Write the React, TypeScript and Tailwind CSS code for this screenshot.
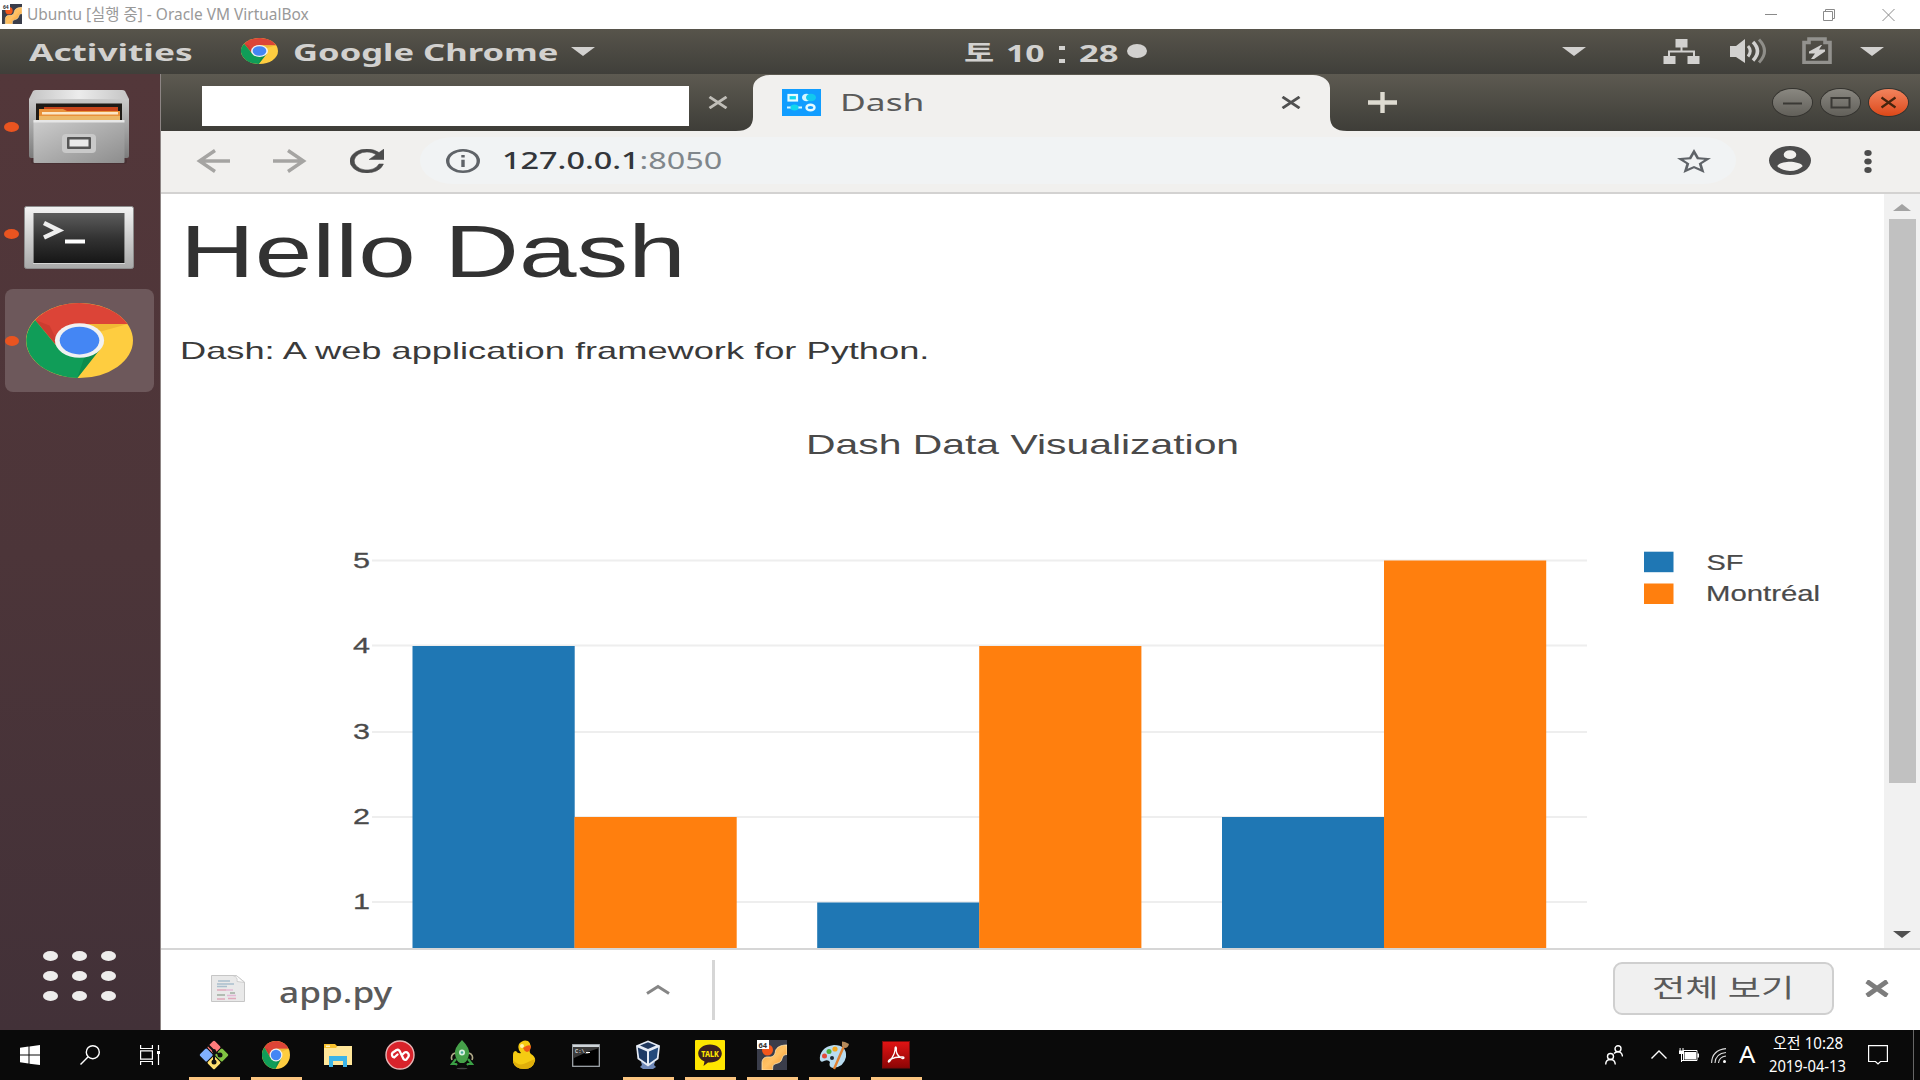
import React, { useLayoutEffect, useRef } from "react";

const UI = "font-['Noto_Sans','Noto_Sans_CJK_KR',sans-serif]";
const ARIAL = "font-['Liberation_Sans','Arial',sans-serif]";

/* Text stretched horizontally so that it fills exactly the width of its box. */
function Fit({ className, children }: { className: string; children: React.ReactNode }) {
  const box = useRef<HTMLSpanElement>(null);
  const ink = useRef<HTMLSpanElement>(null);
  useLayoutEffect(() => {
    const apply = () => {
      if (box.current && ink.current) {
        ink.current.style.transform = `scaleX(${box.current.clientWidth / ink.current.offsetWidth})`;
      }
    };
    apply();
    document.fonts?.ready.then(apply);
  }, []);
  return (
    <span className={`block shrink-0 whitespace-nowrap ${className}`} ref={box}>
      <span ref={ink} className="inline-block origin-left align-top">
        {children}
      </span>
    </span>
  );
}

function ChromeLogo({ className }: { className: string }) {
  return (
    <svg viewBox="0 0 100 100" preserveAspectRatio="none" className={className}>
      <circle cx="50" cy="50" r="50" fill="#fecd40" />
      <path d="M8.500 22.500 A50 50 0 0 1 95 28 H50 L50 50 L29 58 Z" fill="#dc4437" />
      <path d="M8.500 22.500 L22 30 L29 50 L27 54 Z" fill="#b93327" opacity=".45" />
      <path d="M8.500 22.500 A50 50 0 0 0 48 100 L69 62 L50 50 L29 58 Z" fill="#109d58" />
      <path d="M48 100 L69 62 L56 66 Z" fill="#0b8045" opacity=".6" />
      <path d="M50 28 H95 L70 38Z" fill="#e8ac2e" opacity=".6" />
      <circle cx="50" cy="50" r="23" fill="#f1f1f1" />
      <circle cx="50" cy="50" r="18.500" fill="#4486f4" />
    </svg>
  );
}

function VmIcon({ className }: { className: string }) {
  return (
    <svg viewBox="0 0 30 30" className={className}>
      <defs>
        <linearGradient id="vmg" x1="0" y1="0" x2="1" y2="1">
          <stop offset="0" stopColor="#f9a53a" />
          <stop offset=".5" stopColor="#ffc266" />
          <stop offset="1" stopColor="#f08a1c" />
        </linearGradient>
      </defs>
      <rect width="30" height="30" fill="#3a3d4a" />
      <path d="M5 30 V23 C5 18.500 8 16.500 12 17 C16 17.300 18 15 18.500 11 C19.500 7 24 5 30 5 V14.500 C26 14.500 25.500 17 24.500 20 C23 23.500 19 23 17 24.500 C15 26 16 28 15.500 30Z" fill="url(#vmg)" stroke="#ffe9b8" strokeWidth=".8" />
      <circle cx="10.500" cy="10" r="5.500" fill="#f4571b" />
      <rect x="0" y="0" width="12" height="9" fill="#fff" />
      <text x="1.500" y="7.600" fontSize="7.500" fontWeight="700" fontFamily="Noto Sans" fill="#333">64</text>
    </svg>
  );
}

function Caret({ className }: { className: string }) {
  return (
    <svg viewBox="0 0 24 9" preserveAspectRatio="none" className={className}>
      <path d="M0 0H24L12 9Z" fill="currentColor" />
    </svg>
  );
}

function Cross({ className, w = 3 }: { className: string; w?: number }) {
  return (
    <svg viewBox="0 0 20 14" preserveAspectRatio="none" className={className}>
      <path d="M1.500 1L18.500 13M18.500 1L1.500 13" stroke="currentColor" strokeWidth={w} fill="none" />
    </svg>
  );
}

function HostTitleBar() {
  return (
    <div className={`flex h-[29px] shrink-0 items-center bg-white pl-[2px] text-[#999] ${UI}`}>
      <VmIcon className="-mt-px size-5" />
      <Fit className="ml-[5px] w-[282px] text-[15.500px] leading-[29px]">Ubuntu [실행 중] - Oracle VM VirtualBox</Fit>
      <svg viewBox="0 0 130 14" className="ml-auto mr-[25px] h-[14px] w-[130px]" fill="none" stroke="#8a8a8a">
        <path d="M0 6.500H12M58.500 3.500h9v9h-9zM60.500 3.500V1.500h9v9H67.500M117.500 1l12 12M129.500 1l-12 12" />
      </svg>
    </div>
  );
}

function GnomeBar() {
  return (
    <div className={`flex h-[45px] shrink-0 items-start bg-gradient-to-b from-[#57544b] to-[#403f3a] text-[#d2d1cf] ${UI}`}>
      <Fit className="ml-[29px] w-[163px] text-[24px] leading-[45px] font-bold">Activities</Fit>
      <ChromeLogo className="mt-[9px] ml-[49px] h-[26px] w-[37px]" />
      <Fit className="ml-[15px] w-[265px] text-[24px] leading-[45px] font-bold">Google Chrome</Fit>
      <Caret className="mt-[18px] ml-[13px] h-[9px] w-[24px]" />
      <Fit className="ml-[369px] w-[30px] text-[23px] leading-[47px] font-bold">토</Fit>
      <Fit className="ml-[12px] w-[39px] text-[22.500px] leading-[49px] font-bold">10</Fit>
      <span className="mt-[17px] ml-[14px] flex w-[6px] flex-col gap-[9px]">
        <i className="h-1 bg-[#d2d1cf]" />
        <i className="h-1 bg-[#d2d1cf]" />
      </span>
      <Fit className="ml-[14px] w-[40px] text-[22.500px] leading-[49px] font-bold">28</Fit>
      <span className="mt-[15px] ml-[8px] h-[14px] w-[20px] rounded-[50%] bg-[#d2d1cf]" />
      <Caret className="mt-[18px] ml-[415px] h-[9px] w-[24px]" />
      <svg viewBox="0 0 37 26" className="mt-[9px] ml-[77px] h-[26px] w-[37px]" fill="#d2d1cf">
        <path d="M12.500 1h12v8.500h-5v3H32V18h4.500v8h-12v-8H30v-3.500H7V18h5.500v8H.5v-8H5v-5.500h12.500v-3h-5z" />
      </svg>
      <svg viewBox="0 0 37 26" className="mt-[9px] ml-[30px] h-[26px] w-[37px]" fill="none">
        <path d="M0 8h6l9-7v24l-9-6H0z" fill="#d2d1cf" />
        <path d="M18 8q4.500 5 0 10.500" stroke="#d2d1cf" strokeWidth="3" />
        <path d="M23 4q9 9 0 18.500" stroke="#d2d1cf" strokeWidth="3.500" />
        <path d="M29 1.500q11 11.500 0 23" stroke="#8f8e89" strokeWidth="3" />
      </svg>
      <svg viewBox="0 0 30 27" className="mt-[8px] ml-[35px] h-[27px] w-[30px]">
        <path d="M2 5.500h5V2h16v3.500h5V25.500H2z" fill="none" stroke="#93928e" strokeWidth="3.600" />
        <path d="M19 8l-12 6.500v2h6l-4 5.500h3l11-7.500v-2h-6l3-4.500z" fill="#d2d1cf" />
      </svg>
      <Caret className="mt-[18px] ml-[28px] h-[9px] w-[24px]" />
    </div>
  );
}

function FilesIcon() {
  return (
    <svg viewBox="0 0 102 74" className="h-[74px] w-[102px]">
      <defs>
        <linearGradient id="fa" x1="0" y1="0" x2="0" y2="1">
          <stop offset="0" stopColor="#c9c9c9" />
          <stop offset="1" stopColor="#7c7c7c" />
        </linearGradient>
        <linearGradient id="fb" x1="0" y1="0" x2="1" y2="1">
          <stop offset="0" stopColor="#cdcdcd" />
          <stop offset="1" stopColor="#8d8d8d" />
        </linearGradient>
        <linearGradient id="fc" x1="0" y1="0" x2="1" y2="0">
          <stop offset="0" stopColor="#c4c4c4" />
          <stop offset=".5" stopColor="#ececec" />
          <stop offset="1" stopColor="#c4c4c4" />
        </linearGradient>
      </defs>
      <rect x="3" y="68" width="96" height="6" rx="3" fill="#3e2a2c" opacity=".5" />
      <path d="M1 9h100v57q0 2-2 2H3q-2 0-2-2z" fill="url(#fa)" />
      <path d="M5 1q1-1 3-1h86q2 0 3 1l4 8H1z" fill="url(#fc)" />
      <rect x="8" y="13.500" width="86" height="20" fill="#1f1b17" />
      <path d="M16 17h74v17H16z" fill="#c8451b" />
      <path d="M11 19h24l4 2h53v13H11z" fill="#e8913a" />
      <path d="M14 22h76v2.500H14z" fill="#fbe6c5" />
      <path d="M11 26h81v8H11z" fill="#ecb867" />
      <rect x="5.500" y="30" width="91" height="43" rx="1" fill="url(#fb)" />
      <rect x="5.500" y="30" width="91" height="2.500" fill="#e6e6e6" />
      <rect x="34" y="44" width="34" height="19" rx="4" fill="#c9c9c9" />
      <rect x="39" y="47" width="24" height="12" rx="1" fill="#555" />
      <rect x="41.500" y="49.500" width="19" height="7" fill="#eaeaea" />
    </svg>
  );
}

function TerminalIcon() {
  return (
    <svg viewBox="0 0 110 64" className="h-[64px] w-[110px]">
      <defs>
        <linearGradient id="ta" x1="0" y1="0" x2="0" y2="1">
          <stop offset="0" stopColor="#f3f3f3" />
          <stop offset="1" stopColor="#a9a9a9" />
        </linearGradient>
        <linearGradient id="tb" x1="0" y1="0" x2="0" y2="1">
          <stop offset="0" stopColor="#5c5c5c" />
          <stop offset=".5" stopColor="#333" />
          <stop offset="1" stopColor="#161616" />
        </linearGradient>
      </defs>
      <rect x=".5" y=".5" width="109" height="62" rx="2" fill="url(#ta)" stroke="#8d8d8d" />
      <rect x="9" y="6" width="92" height="52" fill="#efefef" opacity=".6" />
      <rect x="9.500" y="7" width="91" height="50" fill="url(#tb)" />
      <path d="M20 17l15 7.500-15 7" fill="none" stroke="#eee" strokeWidth="4.500" />
      <path d="M41 35.500h20" stroke="#fff" strokeWidth="4" />
    </svg>
  );
}

function Launcher() {
  return (
    <div className="flex w-[160px] shrink-0 flex-col bg-gradient-to-b from-[#53373a] via-[#4c3539] to-[#423138]">
      <div className="mt-[16px] flex h-[74px] items-center gap-[9px]">
        <span className="ml-[4px] h-[10px] w-[15px] shrink-0 rounded-[50%] bg-[#e95420]" />
        <FilesIcon />
      </div>
      <div className="mt-[42px] flex h-[64px] items-start gap-[5px]">
        <span className="mt-[23px] ml-[4px] h-[10px] w-[15px] shrink-0 rounded-[50%] bg-[#e95420]" />
        <TerminalIcon />
      </div>
      <div className="mt-[19px] ml-[5px] flex h-[103px] w-[149px] items-center gap-[7px] rounded-[8px] bg-[#6d585b]">
        <span className="h-[10px] w-[14px] shrink-0 rounded-[50%] bg-[#e95420]" />
        <ChromeLogo className="h-[75px] w-[107px]" />
      </div>
      <div className="mt-auto mb-[29px] ml-[43px] grid w-[73px] grid-cols-3 gap-x-[14px] gap-y-[10px]">
        {Array.from({ length: 9 }, (_, i) => (
          <span key={i} className="h-[10px] w-[15px] rounded-[50%] bg-[#eeedec]" />
        ))}
      </div>
    </div>
  );
}

function TabStrip() {
  return (
    <div className="flex h-[57px] shrink-0 items-end bg-gradient-to-b from-[#5d5a51] to-[#3e3d38]">
      <div className="ml-[41px] flex h-full items-start pt-[12px]">
        <div className="h-[40px] w-[487px] bg-white" />
        <Cross className="mt-[10px] ml-[19px] h-[13px] w-[20px] text-[#c0beb8]" />
      </div>
      <svg viewBox="0 0 17 14" className="ml-[8px] h-[14px] w-[17px]">
        <path d="M17 0V14H0Q17 14 17 0Z" fill="#f1f0ee" />
      </svg>
      <div className="flex h-[56px] w-[577px] items-start rounded-t-[17px_13px] bg-[#f1f0ee]">
        <svg viewBox="0 0 39 27" className="mt-[14px] ml-[29px] h-[27px] w-[39px]">
          <rect width="39" height="27" fill="#119dff" />
          <rect x="6.500" y="6" width="8.500" height="5.500" fill="#12d6ee" stroke="#e6fbff" strokeWidth="2.200" />
          <ellipse cx="24.500" cy="8.500" rx="4.500" ry="3.800" fill="#d5f6ff" />
          <ellipse cx="29" cy="8.500" rx="5" ry="3.800" fill="#12c8ee" />
          <path d="M5 18.500h15" stroke="#d5f6ff" strokeWidth="2" />
          <ellipse cx="12.500" cy="18.500" rx="4" ry="3" fill="#12d6ee" />
          <ellipse cx="28.500" cy="18.500" rx="4" ry="2.800" fill="none" stroke="#e6fbff" strokeWidth="2.400" />
        </svg>
        <Fit className={`ml-[19px] w-[84px] text-[24px] leading-[53px] text-[#5a5a5a] ${UI}`}>Dash</Fit>
        <Cross className="mt-[21px] ml-auto mr-[29px] h-[13px] w-[20px] text-[#505050]" />
      </div>
      <svg viewBox="0 0 17 14" className="h-[14px] w-[17px]">
        <path d="M0 0V14H17Q0 14 0 0Z" fill="#f1f0ee" />
      </svg>
      <svg viewBox="0 0 29 21" className="mb-[18px] ml-[21px] h-[21px] w-[29px]">
        <path d="M14.500 0V21M0 10.500H29" stroke="#dedbd1" strokeWidth="4.400" />
      </svg>
      <div className="mr-[12px] mb-[15px] ml-auto flex gap-[9px]">
        <svg viewBox="0 0 39 27" className="h-[27px] w-[39px] rounded-[50%] bg-gradient-to-b from-[#8a8881] to-[#62605a] ring-1 ring-[#34332f]">
          <path d="M10 14.500H29" stroke="#3a3935" strokeWidth="1.800" />
        </svg>
        <svg viewBox="0 0 39 27" className="h-[27px] w-[39px] rounded-[50%] bg-gradient-to-b from-[#8a8881] to-[#62605a] ring-1 ring-[#34332f]">
          <rect x="10.500" y="9" width="18" height="9.500" fill="none" stroke="#3a3935" strokeWidth="2" />
        </svg>
        <svg viewBox="0 0 39 27" className="h-[27px] w-[39px] rounded-[50%] bg-gradient-to-b from-[#f2835c] to-[#dc4714] ring-1 ring-[#34332f]">
          <path d="M12.500 8.500l14 10M26.500 8.500l-14 10" stroke="#45240f" strokeWidth="2.200" />
        </svg>
      </div>
    </div>
  );
}

function Toolbar() {
  return (
    <div className="flex h-[63px] shrink-0 items-start border-b-2 border-[#d3d2d1] bg-[#f1f0ee]">
      <svg viewBox="0 0 34 24" className="mt-[18px] ml-[35px] h-[24px] w-[34px]" fill="none" stroke="#a5a4a2" strokeWidth="3.400">
        <path d="M34 12H4M19 1.500L3.500 12 19 22.500" />
      </svg>
      <svg viewBox="0 0 34 24" className="mt-[18px] ml-[43px] h-[24px] w-[34px]" fill="none" stroke="#a5a4a2" strokeWidth="3.400">
        <path d="M0 12H30M15 1.500L30.500 12 15 22.500" />
      </svg>
      <svg viewBox="4 4 16 16" preserveAspectRatio="none" className="mt-[18px] ml-[43px] h-[24px] w-[34px]" fill="#4c4c4c" stroke="#4c4c4c" strokeWidth=".3">
        <path d="M17.650 6.350A7.950 7.950 0 0 0 12 4a8 8 0 1 0 7.730 10h-2.080A6 6 0 1 1 12 6c1.660 0 3.140.69 4.220 1.780L13 11h7V4z" />
      </svg>
      <div className="mt-[6px] ml-[36px] flex h-[47px] w-[1316px] items-start rounded-[33px_/_23.500px] bg-[#f1f3f4]">
        <svg viewBox="2 2 20 20" preserveAspectRatio="none" className="mt-[12px] ml-[26px] h-[24px] w-[34px]" fill="#5f6368">
          <path d="M11 17h2v-6h-2v6zm1-15a10 10 0 1 0 0 20 10 10 0 0 0 0-20zm0 18a8 8 0 1 1 0-16 8 8 0 0 1 0 16zM11 9h2V7h-2v2z" />
        </svg>
        <Fit className={`ml-[22px] w-[220px] text-[24px] leading-[46px] text-[#33363b] ${UI}`}>
          <span className="font-medium">127.0.0.1</span><span className="text-[#80868b]">:8050</span>
        </Fit>
        <svg viewBox="2 2 20 19" preserveAspectRatio="none" className="mt-[12px] ml-auto mr-[25px] h-[24px] w-[34px]" fill="#5f6368">
          <path d="M22 9.240l-7.190-.62L12 2 9.190 8.630 2 9.240l5.460 4.730L5.820 21 12 17.270 18.180 21l-1.630-7.030L22 9.240zM12 15.400l-3.760 2.270 1-4.280-3.320-2.880 4.380-.38L12 6.100l1.710 4.040 4.380.38-3.320 2.880 1 4.280L12 15.400z" />
        </svg>
      </div>
      <svg viewBox="2 2 20 20" preserveAspectRatio="none" className="mt-[15px] ml-[33px] h-[29px] w-[42px]" fill="#4c4c4c">
        <path d="M12 2a10 10 0 1 0 0 20 10 10 0 0 0 0-20zm0 3a3 3 0 1 1 0 6 3 3 0 0 1 0-6zm0 14.200a7.200 7.200 0 0 1-6-3.220c.03-1.990 4-3.080 6-3.080s5.970 1.090 6 3.080a7.200 7.200 0 0 1-6 3.220z" />
      </svg>
      <svg viewBox="0 0 8 24" className="mt-[19px] ml-[53px] h-[24px] w-[8px]" fill="#4c4c4c">
        <ellipse cx="4" cy="3" rx="3.700" ry="3" />
        <ellipse cx="4" cy="11.500" rx="3.700" ry="3" />
        <ellipse cx="4" cy="20" rx="3.700" ry="3" />
      </svg>
    </div>
  );
}

const GRID = [560.5, 645.5, 732, 817, 902];
const BARS = [
  { x: 412.5, y: 646, c: "#1f77b4" },
  { x: 574.5, y: 817, c: "#ff7f0e" },
  { x: 817.2, y: 902.5, c: "#1f77b4" },
  { x: 979.2, y: 646, c: "#ff7f0e" },
  { x: 1222, y: 817, c: "#1f77b4" },
  { x: 1384, y: 560.5, c: "#ff7f0e" },
];

/* Grouped bar chart; its view box starts below the chart title. */
function BarChart() {
  return (
    <svg viewBox="161 530 1723 418" className={`h-[418px] w-[1723px] shrink-0 ${ARIAL}`} fontSize="22" fill="#4a4a4a">
      {GRID.map((y, i) => (
        <g key={y}>
          <path d={`M372 ${y}H1587`} stroke="#eee" strokeWidth="1.800" />
          <text x="353" y={y + 7.4} textLength="17" lengthAdjust="spacingAndGlyphs" stroke="#4a4a4a" strokeWidth=".3">
            {5 - i}
          </text>
        </g>
      ))}
      {BARS.map((b) => (
        <rect key={b.x} x={b.x} y={b.y} width="162.200" height={948 - b.y} fill={b.c} />
      ))}
      <rect x="1644" y="551.700" width="29.500" height="20.500" fill="#1f77b4" />
      <rect x="1644" y="583.500" width="29.500" height="20.500" fill="#ff7f0e" />
      <text x="1706.500" y="569.500" textLength="37" lengthAdjust="spacingAndGlyphs" stroke="#4a4a4a" strokeWidth=".2">SF</text>
      <text x="1706" y="601" textLength="114" lengthAdjust="spacingAndGlyphs" stroke="#4a4a4a" strokeWidth=".2">Montréal</text>
    </svg>
  );
}

function Page() {
  return (
    <div className="flex h-[754px] shrink-0 bg-white">
      <div className={`flex w-[1723px] shrink-0 flex-col ${ARIAL}`}>
        <h1 className="mt-[12px] ml-[19px] text-[#323232]">
          <Fit className="w-[506px] text-[75px] leading-[90px]">Hello Dash</Fit>
        </h1>
        <div className="mt-[39px] ml-[19px] text-[#3a3a3a]">
          <Fit className="w-[749px] text-[24px] leading-[32px]">Dash: A web application framework for Python.</Fit>
        </div>
        <div className="mt-[57px] mb-[52px] ml-[645px] h-[54px] text-[#4a4a4a]">
          <Fit className="w-[433px] text-[28.500px] leading-[40px]">Dash Data Visualization</Fit>
        </div>
        <BarChart />
      </div>
      <div className="flex grow flex-col items-center bg-[#f1f1f1]">
        <Caret className="mt-[10px] h-[7px] w-[18px] rotate-180 text-[#a3a3a3]" />
        <div className="mt-[8px] h-[564px] w-[27px] bg-[#c1c1c1]" />
        <Caret className="mt-auto mb-[10px] h-[7px] w-[18px] text-[#505050]" />
      </div>
    </div>
  );
}

function DownloadShelf() {
  return (
    <div className="flex grow items-start border-t-2 border-[#d6d6d6] bg-white">
      <svg viewBox="0 0 34 27" className="mt-[25px] ml-[50px] h-[27px] w-[34px]">
        <path d="M.5.5H25L33.500 7V26.500H.5z" fill="#e9e9e9" stroke="#c6c6c6" />
        <path d="M22 .5Q27 2 26 6.500L33.500 7.500 26 1z" fill="#fafafa" stroke="#c6c6c6" strokeWidth=".8" />
        <path d="M7 6h12M6 9h17M6 11.500h10" stroke="#a9bfcd" strokeWidth="1.400" />
        <path d="M6 15h9M17 23.500h8M6 24h8" stroke="#e0a9bb" strokeWidth="1.400" />
        <path d="M6 20h8M19 18h5" stroke="#a0ada0" strokeWidth="1.400" />
        <path d="M16 20.500h9M15 15h7" stroke="#e3b9d5" strokeWidth="1.400" />
      </svg>
      <Fit className={`mt-[22px] ml-[34px] w-[113px] text-[29px] leading-[40px] font-medium text-[#5a5a5a] ${UI}`}>app.py</Fit>
      <svg viewBox="0 0 24 11" className="mt-[34px] ml-[254px] h-[11px] w-[24px]">
        <path d="M1 9.500L12 2.500L23 9.500" fill="none" stroke="#868686" strokeWidth="3" />
      </svg>
      <div className="mt-[10px] ml-[42px] h-[60px] w-[3px] bg-[#d6d6d6]" />
      <div className={`mt-[12px] ml-auto flex h-[53px] w-[221px] justify-center rounded-[9px] border-2 border-[#cfcfcf] bg-[#f0f0f0] text-[#5a5a5a] ${UI}`}>
        <Fit className="w-[143px] text-[25px] leading-[46px]">전체 보기</Fit>
      </div>
      <Cross w={4} className="mt-[30px] mr-[31px] ml-[31px] h-[17px] w-[24px] text-[#7d7d7d]" />
    </div>
  );
}

const gitIcon = (
  <svg viewBox="0 0 30 30" className="size-[30px]">
    <g transform="rotate(45 15 15)">
      <rect x="4.500" y="4.500" width="10" height="10" rx="1.500" fill="#ff7b7b" />
      <rect x="15.500" y="4.500" width="10" height="10" rx="1.500" fill="#80c342" />
      <rect x="4.500" y="15.500" width="10" height="10" rx="1.500" fill="#80b0ff" />
      <rect x="15.500" y="15.500" width="10" height="10" rx="1.500" fill="#ffe070" />
    </g>
    <path d="M9 5l6 6v11M15 11l6 4" fill="none" stroke="#111" strokeWidth="2" />
    <circle cx="15" cy="11" r="2" fill="#111" />
    <circle cx="21" cy="15" r="2.500" fill="#111" />
    <circle cx="15" cy="22" r="2.500" fill="#111" />
  </svg>
);
const explorerIcon = (
  <svg viewBox="0 0 28 24" className="h-[24px] w-[28px]">
    <path d="M0 1h11l2 2h14v5H0z" fill="#f9c22e" />
    <path d="M2 2.500h4v1.500H2z" fill="#fff3c4" />
    <path d="M0 5h12l1.500-2H28v19H0z" fill="#ffe699" />
    <path d="M5 13h18v11h-4v-6H9v6H5z" fill="#3bb4e8" />
  </svg>
);
const authyIcon = (
  <svg viewBox="0 0 30 30" className="size-[30px]">
    <circle cx="15" cy="15" r="14" fill="#d9232b" stroke="#e8b5b5" strokeWidth="1.400" />
    <path d="M12.500 14.500L9.200 17.500A3 3 0 0 1 7.500 12.800L11.500 10Q13 9.200 14.500 10.700L18.500 19Q20 20.500 21.500 19.300L23.300 16.800A3 3 0 0 0 19.500 12.500L17 15" fill="none" stroke="#fff" strokeWidth="2.300" strokeLinecap="round" strokeLinejoin="round" />
  </svg>
);
const rocketIcon = (
  <svg viewBox="0 0 24 30" className="h-[30px] w-[24px]">
    <path d="M12 0Q20 8 19 14 18 21 14 23H10Q6 21 5 14 4 8 12 0Z" fill="#45a049" />
    <path d="M5 13Q0 15 2 20M19 13Q24 15 22 20" fill="none" stroke="#b0a988" strokeWidth="1.600" />
    <path d="M6 19l-4 5h4l1 1M18 19l4 5h-4l-1 1" fill="none" stroke="#3aa045" strokeWidth="2.200" />
    <circle cx="12" cy="12.500" r="3" fill="#d8f0e0" />
    <circle cx="12" cy="12.500" r="1.300" fill="#4a9" />
    <ellipse cx="12" cy="28.500" rx="5.500" ry=".8" fill="#444" />
  </svg>
);
const duckIcon = (
  <svg viewBox="0 0 24 30" className="h-[30px] w-[24px]">
    <path d="M1 15q0-4 3-4 2 3 5 2 Q5 9 7 4q4-5 9-3 4 3 2 8-1 3 1 5 5 3 4 7-2 8-11 8Q3 29 1 22z" fill="#f5cb12" />
    <path d="M1 20q6 7 13 3 4-2 9-4-1 10-11 10Q3 29 1 22z" fill="#dfae0a" />
    <circle cx="10" cy="6" r="2" fill="#fff3a8" />
    <path d="M11 8q5-4 8-2 0 5-4 6-3-1-4-4z" fill="#ee5a17" />
  </svg>
);
const cmdIcon = (
  <svg viewBox="0 0 28 23" className="h-[23px] w-[28px]">
    <rect x=".7" y=".7" width="26.600" height="21.600" fill="#000" stroke="#a9b0b5" strokeWidth="1.200" />
    <path d="M1 1H27V4Q14 8 2 14H1z" fill="#3a3a3a" />
    <rect x="1" y="1" width="26" height="2" fill="#cfd5d9" />
    <text x="3" y="9" fontSize="5.500" fontFamily="Liberation Mono" fill="#fff">C:\_</text>
    <path d="M14 8.500h4" stroke="#fff" />
  </svg>
);
const vboxIcon = (
  <svg viewBox="0 0 26 30" className="h-[30px] w-[26px]">
    <path d="M6 22h14l-1 3 2 2-3 2H8l-3-2 2-2z" fill="#6f88b8" />
    <path d="M13 .5L25 5.500 23.500 19 13 26.500 2.500 19 1 5.500z" fill="#e6ecf6" />
    <path d="M13 2.200L21 5.500 13 9 5 5.500z" fill="#21395f" />
    <path d="M2.800 7.500L12 11.500V23.500L4.200 18z" fill="#1d3a66" />
    <path d="M23.200 7.500L14 11.500V23.500L21.800 18z" fill="#244a7c" />
  </svg>
);
const talkIcon = (
  <svg viewBox="0 0 30 30" className="size-[30px]">
    <rect width="30" height="30" rx="1" fill="#ffe600" />
    <path d="M15 4.500c7 0 11.800 4 11.800 9s-5 9-11.800 9l-2 0-4.500 3.500 1-4.600C5.500 19.700 3.200 17 3.200 13.500c0-5 5-9 11.800-9z" fill="#3b2020" />
    <text x="6.300" y="16.700" fontSize="8" fontWeight="800" fontFamily="Noto Sans" fill="#ffe600" textLength="17.500" lengthAdjust="spacingAndGlyphs">TALK</text>
  </svg>
);
const paintIcon = (
  <svg viewBox="0 0 30 30" className="size-[30px]">
    <path d="M15 5C5 6 0 13 1 20q1 3 4 1 4-2 6 1-2 5 3 6 11-1 13-11Q28 5 15 5Z" fill="#b9dcf0" />
    <circle cx="5.500" cy="16" r="2.500" fill="#e34a3a" />
    <circle cx="10" cy="11.500" r="2.500" fill="#4caf3c" />
    <circle cx="16" cy="9" r="2.600" fill="#f4a821" />
    <circle cx="13" cy="18" r="2" fill="#1c2733" />
    <path d="M25 6L15 29" stroke="#e08132" strokeWidth="2.400" />
    <path d="M23 1.500l3 .5 4 2q-1 4-4 4l-3-2z" fill="#b58a5b" />
  </svg>
);
const acrobatIcon = (
  <svg viewBox="0 0 28 28" className="size-[28px]">
    <defs>
      <linearGradient id="ac" x1="0" y1="0" x2="0" y2="1">
        <stop offset="0" stopColor="#e11414" />
        <stop offset="1" stopColor="#8c0505" />
      </linearGradient>
    </defs>
    <rect x=".5" y=".5" width="27" height="26.500" fill="url(#ac)" stroke="#7b0a0a" />
    <path d="M6.500 21q-1-1.500 3-3.500 4-6 3.600-10.500.4-2 1.300 0Q13.500 13 18 16q4-.5 4 1-1 1.500-4-1-5 .2-8.500 1.800-2.300 3.500-3 3.200z" fill="none" stroke="#fff" strokeWidth="1.300" />
  </svg>
);

const APPS: { icon: React.ReactNode; open: boolean }[] = [
  { icon: gitIcon, open: true },
  { icon: <ChromeLogo className="size-[28px]" />, open: true },
  { icon: explorerIcon, open: false },
  { icon: authyIcon, open: false },
  { icon: rocketIcon, open: false },
  { icon: duckIcon, open: false },
  { icon: cmdIcon, open: false },
  { icon: vboxIcon, open: true },
  { icon: talkIcon, open: true },
  { icon: <VmIcon className="size-[30px]" />, open: true },
  { icon: paintIcon, open: true },
  { icon: acrobatIcon, open: true },
];

function Taskbar() {
  return (
    <div className={`flex h-[50px] shrink-0 bg-[#0a0a0a] text-white ${UI}`}>
      <div className="flex w-[183px] shrink-0 items-center pl-[20px]">
        <svg viewBox="0 0 20 20" className="size-5" fill="#fff">
          <path d="M0 2.800L8.500 1.500V9.500H0zM9.500 1.400L20 0V9.500H9.500zM0 10.500H8.500V18.500L0 17.300zM9.500 10.500H20V20L9.500 18.700z" />
        </svg>
        <svg viewBox="0 0 20 20" className="ml-[40px] size-5" fill="none" stroke="#fff" strokeWidth="1.400">
          <circle cx="12.800" cy="7.200" r="6.500" />
          <path d="M8.200 11.800L.5 19.500" />
        </svg>
        <svg viewBox="0 0 20 20" className="ml-[40px] size-5" fill="none" stroke="#fff" strokeWidth="1.200">
          <path d="M.6 0V3.500H12.400V0M.6 20V16.500H12.400V20M.6 5.800H12.400V14.200H.6zM18.500 0V5M18.500 9V20" />
          <path d="M17 6h3v3h-3z" fill="#fff" stroke="none" />
        </svg>
      </div>
      {APPS.map((a, i) => (
        <div key={i} className="flex h-[50px] w-[62px] shrink-0 flex-col items-center">
          <div className="flex h-[47px] items-center pt-[3px]">{a.icon}</div>
          {a.open && <div className="h-[3px] w-[51px] bg-[#fbc580]" />}
        </div>
      ))}
      <div className="ml-auto flex items-start">
        <svg viewBox="0 0 18 20" className="mt-[15px] h-[20px] w-[18px]" fill="none" stroke="#fff" strokeWidth="1.400">
          <circle cx="5.500" cy="11.500" r="3" />
          <path d="M.7 19.500q0-5 4.800-5 4.500 0 4.800 5" />
          <circle cx="13" cy="3.800" r="3" />
          <path d="M9 8.500q2-2 4-1.700 4 .2 4.500 4.700" />
        </svg>
        <svg viewBox="0 0 16 9" className="mt-[20px] ml-[28px] h-[9px] w-[16px]" fill="none" stroke="#fff" strokeWidth="1.400">
          <path d="M.5 8.500L8 1l7.500 7.500" />
        </svg>
        <svg viewBox="0 0 20 14" className="mt-[18px] ml-[12px] h-[14px] w-[20px]">
          <path d="M4.500 2.500H18V12.500H4.500z" fill="none" stroke="#fff" />
          <path d="M5.500 4h11.500v7.500h-11.500zM18.500 5.500h1.500v4h-1.500z" fill="#fff" />
          <path d="M0 2.500h5v3.500H0zM2 6h1v8H2zM.6 0h1v3h-1zM3.500 0h1v3h-1zM2 12h4v1H2z" fill="#fff" />
        </svg>
        <svg viewBox="0 0 16 16" className="mt-[18px] ml-[12px] size-4" fill="none" stroke="#ddd" strokeWidth="1.100">
          <path d="M.6 15Q1 2 15 .6M4 15Q4.500 5.500 15 4.500M7.500 15Q8 9 15 8" />
          <circle cx="13.500" cy="13.500" r="1.500" fill="#fff" stroke="none" />
        </svg>
        <Fit className="mt-px ml-[12px] w-[16px] text-[24px] leading-[46px]">A</Fit>
        <div className="ml-[13px] flex w-[79px] flex-col items-center text-[15.500px] leading-[23px]">
          <Fit className="mt-[2px] w-[70px]">오전 10:28</Fit>
          <Fit className="w-[77px]">2019-04-13</Fit>
        </div>
        <svg viewBox="0 0 20 20" className="mt-[15px] ml-[21px] size-5" fill="none" stroke="#fff" strokeWidth="1.200">
          <path d="M.6.6H19.400V16.500H12.500L10 19 7.500 16.500H.6z" />
        </svg>
        <div className="ml-[25px] h-[50px] w-px bg-[#666]" />
        <div className="w-[6px]" />
      </div>
    </div>
  );
}

export default function App() {
  return (
    <div className="flex h-[1080px] w-[1920px] flex-col overflow-hidden bg-white">
      <HostTitleBar />
      <GnomeBar />
      <div className="flex h-[956px] shrink-0">
        <Launcher />
        <div className="flex w-[1760px] shrink-0 flex-col border-l border-[#8d8584]">
          <TabStrip />
          <Toolbar />
          <Page />
          <DownloadShelf />
        </div>
      </div>
      <Taskbar />
    </div>
  );
}
